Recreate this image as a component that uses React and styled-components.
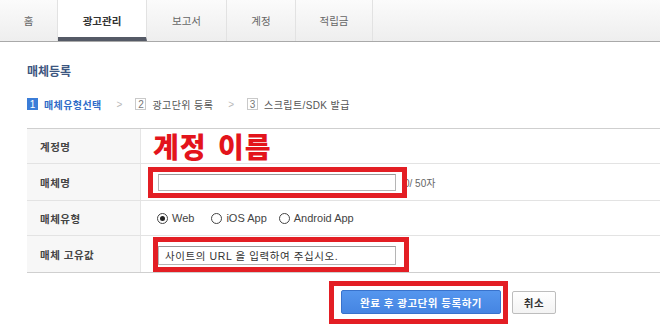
import styled, { createGlobalStyle } from 'styled-components';

const GlobalStyle = createGlobalStyle`
  body {
    margin: 0;
    background: #fff;
    font-family: "Liberation Sans", "Noto Sans CJK KR", sans-serif;
    color: #333;
  }
`;

const Page = styled.div`
  width: 660px;
  height: 334px;
  overflow: hidden;
`;

// 상단 탭
const TabBar = styled.div`
  display: flex;
  height: 41px;
  background: linear-gradient(#fbfbfb, #eeeeee);
  border-bottom: 1px solid #a9a9a9;
`;

const Tab = styled.div`
  width: ${props => props.$w}px;
  display: flex;
  align-items: center;
  justify-content: center;
  box-sizing: border-box;
  border-right: 1px solid #e2e2e2;
  font-size: 10.5px;
  color: ${props => (props.$active ? '#333' : '#666')};
  font-weight: ${props => (props.$active ? 'bold' : 'normal')};
  background: ${props => (props.$active ? '#fff' : 'transparent')};
  border-bottom: ${props => (props.$active ? '4px solid #555a66' : 'none')};
  padding-top: ${props => (props.$active ? '4px' : '0')};
`;

const Content = styled.div`
  padding: 23px 0 0 27px;
`;

const Title = styled.h2`
  margin: 0;
  font-size: 12px;
  line-height: 14px;
  font-weight: bold;
  color: #3d5680;
`;

const Steps = styled.div`
  margin-top: 19px;
  height: 12px;
  display: flex;
  align-items: center;
  font-size: 10px;
  color: #555;
`;

const StepNum = styled.span`
  width: 11px;
  height: 12px;
  display: inline-flex;
  align-items: center;
  justify-content: center;
  font-size: 10px;
  box-sizing: border-box;
  border: 1px solid ${props => (props.$on ? '#3b7dd8' : '#c9c9c9')};
  background: ${props => (props.$on ? '#3b7dd8' : '#fff')};
  color: ${props => (props.$on ? '#fff' : '#777')};
  margin-right: 6px;
`;

const StepText = styled.span`
  color: ${props => (props.$on ? '#2f6bc8' : '#555')};
  font-weight: ${props => (props.$on ? 'bold' : 'normal')};
  letter-spacing: 0.4px;
`;

const Arrow = styled.span`
  color: #b8b8b8;
  font-size: 10px;
  margin: 0 13px 0 15px;
`;

const Table = styled.div`
  margin-top: 18px;
  border-top: 1px solid #cfcfcf;
`;

const Row = styled.div`
  display: grid;
  grid-template-columns: 114px 1fr;
  height: ${props => props.$h}px;
  border-bottom: 1px solid ${props => (props.$last ? '#cfcfcf' : '#e3e3e3')};
`;

const Label = styled.div`
  background: #f7f7f7;
  border-right: 1px solid #e5e5e5;
  display: flex;
  align-items: center;
  padding-left: 13px;
  font-size: 10.5px;
  font-weight: bold;
  color: #444;
  letter-spacing: 0.5px;
`;

const Cell = styled.div`
  display: flex;
  align-items: center;
  padding-left: ${props => props.$pl || 7}px;
`;

// 빨간 손글씨 표시
const RedName = styled.span`
  font-family: "Noto Sans CJK KR", sans-serif;
  font-size: 28px;
  font-weight: 900;
  line-height: 30px;
  color: #e3141c;
  letter-spacing: 1px;
  word-spacing: 4px;
  margin-left: 5px;
`;

const RedBox = styled.div`
  position: relative;
  z-index: 1;
  display: inline-flex;
  align-items: center;
  border: 5px solid #e31e24;
  padding: ${props => props.$pad};
`;

const Input = styled.div`
  width: 238px;
  height: ${props => props.$h}px;
  box-sizing: border-box;
  border: 1px solid #b5b5b5;
  border-top-color: #999;
  background: #fff;
  font-size: 10.5px;
  color: #333;
  display: flex;
  align-items: center;
  padding-left: 6px;
  letter-spacing: 0.6px;
  white-space: nowrap;
`;

const Count = styled.span`
  font-size: 10px;
  color: #666;
  margin-left: -3px;
`;

const Radio = styled.label`
  display: inline-flex;
  align-items: center;
  font-size: 11px;
  color: #444;
  margin-right: ${props => props.$mr}px;
`;

const Circle = styled.span`
  width: 11px;
  height: 11px;
  box-sizing: border-box;
  border-radius: 50%;
  border: 1px solid #444;
  display: inline-flex;
  align-items: center;
  justify-content: center;
  margin-right: 4px;
  &::after {
    content: '';
    width: 5px;
    height: 5px;
    border-radius: 50%;
    background: ${props => (props.$checked ? '#222' : 'transparent')};
  }
`;

const ButtonRow = styled.div`
  display: flex;
  align-items: center;
  margin-top: 8px;
  padding-left: 302px;
`;

const Button = styled.button`
  height: ${props => props.$primary ? 24 : 23}px;
  width: ${props => props.$w}px;
  font-family: inherit;
  font-size: 10.5px;
  font-weight: bold;
  letter-spacing: 0.5px;
  border-radius: 2px;
  padding: 0;
  cursor: pointer;
  border: 1px solid ${props => (props.$primary ? '#3872cc' : '#bdbdbd')};
  background: ${props => (props.$primary ? 'linear-gradient(#5596ee, #4585e2)' : 'linear-gradient(#fff, #f3f3f3)')};
  color: ${props => (props.$primary ? '#fff' : '#333')};
  margin-left: ${props => props.$ml || 0}px;
`;

const tabs = [
  { name: '홈', w: 58 },
  { name: '광고관리', w: 89, active: true },
  { name: '보고서', w: 80 },
  { name: '계정', w: 69 },
  { name: '적립금', w: 77 },
];

const App = () => {
  return (
    <Page>
      <GlobalStyle />
      <TabBar>
        {tabs.map(t => (
          <Tab key={t.name} $w={t.w} $active={t.active}>{t.name}</Tab>
        ))}
      </TabBar>
      <Content>
        <Title>매체등록</Title>
        <Steps>
          <StepNum $on>1</StepNum>
          <StepText $on>매체유형선택</StepText>
          <Arrow>&gt;</Arrow>
          <StepNum>2</StepNum>
          <StepText>광고단위 등록</StepText>
          <Arrow>&gt;</Arrow>
          <StepNum>3</StepNum>
          <StepText>스크립트/SDK 발급</StepText>
        </Steps>
        <Table>
          <Row $h={34}>
            <Label>계정명</Label>
            <Cell><RedName>계정 이름</RedName></Cell>
          </Row>
          <Row $h={36}>
            <Label>매체명</Label>
            <Cell>
              <RedBox $pad="2px 6px 2px 5px">
                <Input $h={17} />
              </RedBox>
              <Count>0/ 50자</Count>
            </Cell>
          </Row>
          <Row $h={34}>
            <Label>매체유형</Label>
            <Cell $pl={16}>
              <Radio $mr={17}><Circle $checked />Web</Radio>
              <Radio $mr={12}><Circle />iOS App</Radio>
              <Radio $mr={0}><Circle />Android App</Radio>
            </Cell>
          </Row>
          <Row $h={36} $last>
            <Label>매체 고유값</Label>
            <Cell $pl={12}>
              <RedBox $pad="4px 8px 2px 0">
                <Input $h={19}>사이트의 URL 을 입력하여 주십시오.</Input>
              </RedBox>
            </Cell>
          </Row>
        </Table>
        <ButtonRow>
          <RedBox $pad="4px 2px 5px 7px">
            <Button $primary $w={160}>완료 후 광고단위 등록하기</Button>
          </RedBox>
          <Button $w={44} $ml={4}>취소</Button>
        </ButtonRow>
      </Content>
    </Page>
  );
};

export default App;
